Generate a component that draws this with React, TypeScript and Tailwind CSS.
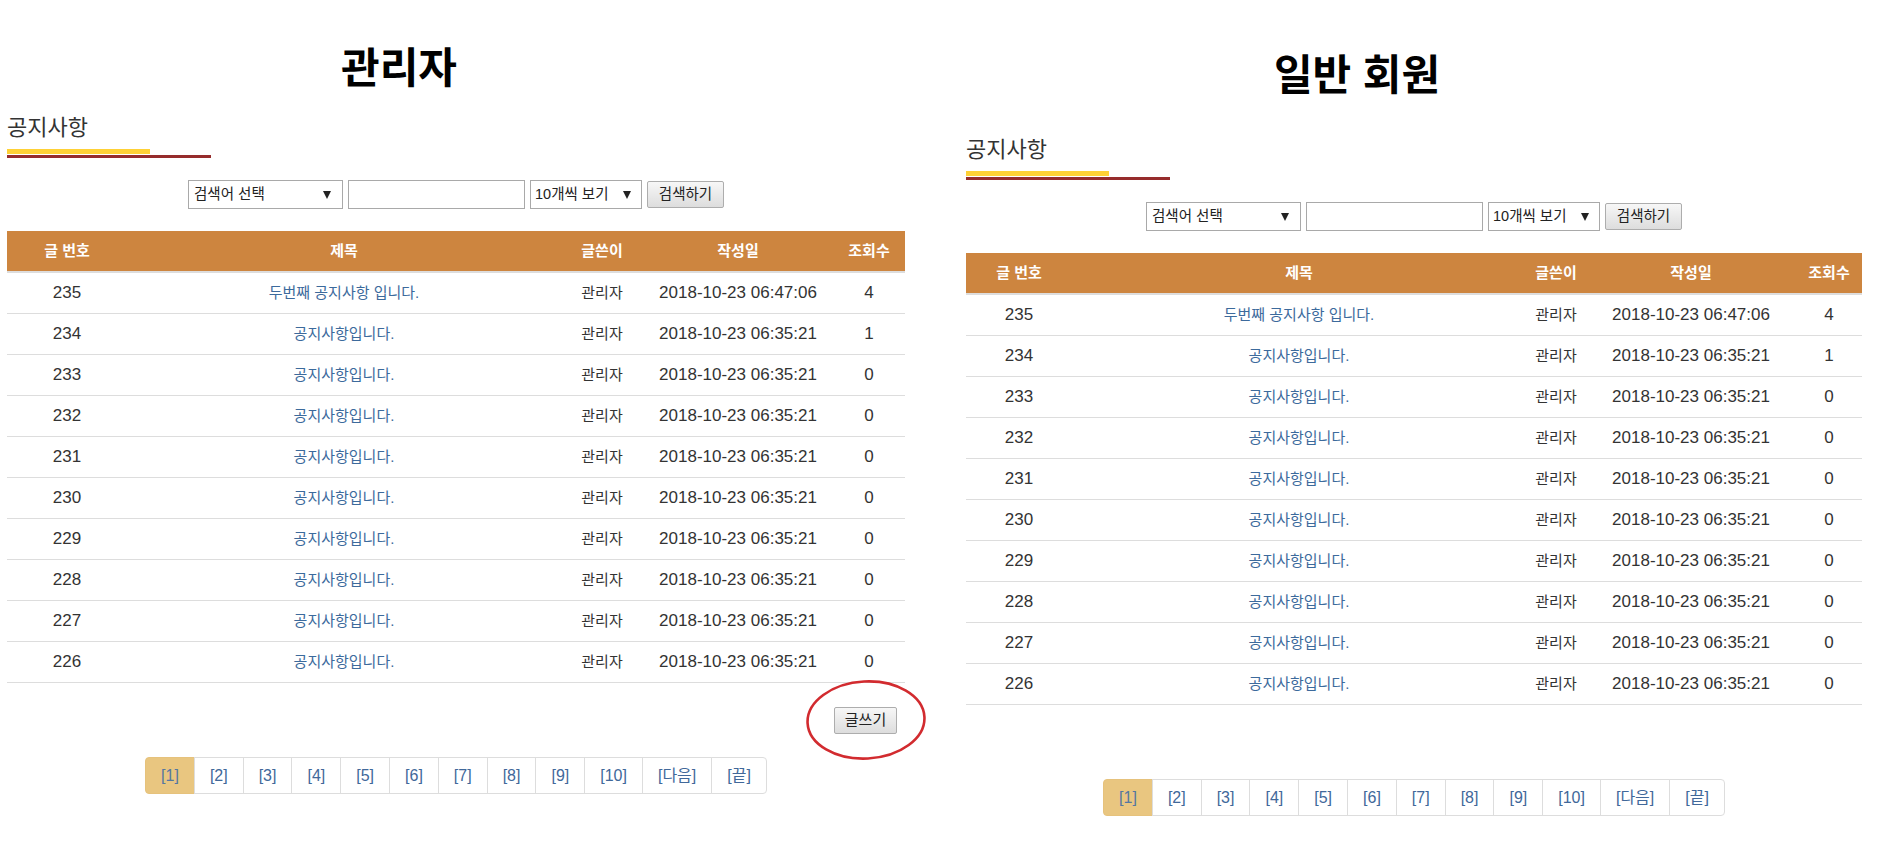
const rows = [
  { no: 235, title: '두번째 공지사항 입니다.', date: '2018-10-23 06:47:06', views: 4 },
  { no: 234, title: '공지사항입니다.', date: '2018-10-23 06:35:21', views: 1 },
  { no: 233, title: '공지사항입니다.', date: '2018-10-23 06:35:21', views: 0 },
  { no: 232, title: '공지사항입니다.', date: '2018-10-23 06:35:21', views: 0 },
  { no: 231, title: '공지사항입니다.', date: '2018-10-23 06:35:21', views: 0 },
  { no: 230, title: '공지사항입니다.', date: '2018-10-23 06:35:21', views: 0 },
  { no: 229, title: '공지사항입니다.', date: '2018-10-23 06:35:21', views: 0 },
  { no: 228, title: '공지사항입니다.', date: '2018-10-23 06:35:21', views: 0 },
  { no: 227, title: '공지사항입니다.', date: '2018-10-23 06:35:21', views: 0 },
  { no: 226, title: '공지사항입니다.', date: '2018-10-23 06:35:21', views: 0 },
]

const pages = ['[1]', '[2]', '[3]', '[4]', '[5]', '[6]', '[7]', '[8]', '[9]', '[10]', '[다음]', '[끝]']

function Arrow() {
  return (
    <svg width="8" height="9" viewBox="0 0 8 9" className="shrink-0">
      <path d="M0 1 L8 1 L4 9 Z" fill="#222" />
    </svg>
  )
}

function SearchBar() {
  return (
    <div className="flex items-center justify-center gap-[5px] text-[14.5px] text-[#222]">
      <div className="flex h-[29px] w-[155px] items-center justify-between border border-[#a9a9a9] bg-white pl-[5px] pr-[11px]">
        <span>검색어 선택</span>
        <Arrow />
      </div>
      <div className="h-[29px] w-[177px] border border-[#a9a9a9] bg-white" />
      <div className="flex h-[29px] w-[112px] items-center justify-between border border-[#a9a9a9] bg-white pl-[4px] pr-[10px]">
        <span>10개씩 보기</span>
        <Arrow />
      </div>
      <div className="flex h-[27px] w-[77px] items-center justify-center rounded-[2px] border border-[#adadad] bg-gradient-to-b from-[#f7f7f7] to-[#dddddd]">
        검색하기
      </div>
    </div>
  )
}

function Pagination() {
  return (
    <div className="flex justify-center">
      <div className="flex text-[16px] text-[#41689a]">
        {pages.map((p, i) => (
          <div
            key={p}
            className={
              'flex h-[37px] items-center border border-[#dddddd] px-[15px] ' +
              (i === 0 ? 'rounded-l-[4px] border-[#e6c27c] bg-[#e9c680] text-[#5577a0] ' : 'bg-white ') +
              (i > 0 ? '-ml-px ' : '') +
              (i === pages.length - 1 ? 'rounded-r-[4px]' : '')
            }
          >
            {p}
          </div>
        ))}
      </div>
    </div>
  )
}

type PanelProps = {
  title: string
  cols: string[]
  panelClass: string
  headingClass: string
  showWrite: boolean
}

function Panel({ title, cols, panelClass, headingClass, showWrite }: PanelProps) {
  const heads = ['글 번호', '제목', '글쓴이', '작성일', '조회수']
  return (
    <div className={panelClass}>
      <h1 className="h-[60px] pr-[114px] text-center text-[42px] font-bold leading-[60px] text-black">{title}</h1>

      {/* 공지사항 heading with underline */}
      <div className={headingClass}>
        <h3 className="text-[22px] leading-[30px] text-[#333]">공지사항</h3>
        <div className="mt-[6px] h-[5px] w-[143px] bg-[#fed136]" />
        <div className="mt-[1px] h-[3px] w-[204px] bg-[#962c2c]" />
      </div>

      <div className="mt-[22px]">
        <SearchBar />
      </div>

      <div className="mt-[22px]">
        <div className="flex h-[42px] border-b-2 border-[#dddddd] bg-[#cd853f] text-[15px] font-semibold text-white">
          {heads.map((h, i) => (
            <div key={h} className={'flex items-center justify-center ' + cols[i]}>
              {h}
            </div>
          ))}
        </div>
        {rows.map((r) => (
          <div key={r.no} className="flex h-[41px] border-b border-[#dddddd] text-[#333]">
            <div className={'flex items-center justify-center text-[17px] ' + cols[0]}>{r.no}</div>
            <div className={'flex items-center justify-center text-[15px] text-[#3c6a9c] ' + cols[1]}>{r.title}</div>
            <div className={'flex items-center justify-center text-[15px] ' + cols[2]}>관리자</div>
            <div className={'flex items-center justify-center text-[17px] ' + cols[3]}>{r.date}</div>
            <div className={'flex items-center justify-center text-[17px] ' + cols[4]}>{r.views}</div>
          </div>
        ))}
      </div>

      <div className={'mt-[24px] flex justify-end pr-[8px] ' + (showWrite ? '' : 'invisible')}>
        <div className="relative">
          <div className="flex h-[27px] w-[63px] items-center justify-center rounded-[2px] border border-[#adadad] bg-gradient-to-b from-[#f7f7f7] to-[#dddddd] text-[15px] text-[#222]">
            글쓰기
          </div>
          {/* red marker circle */}
          <svg className="pointer-events-none absolute left-[-29px] top-[-28px]" width="122" height="82" viewBox="0 0 122 82">
            <ellipse cx="61" cy="41" rx="58.5" ry="38.5" fill="none" stroke="#d22b2f" strokeWidth="2.6" transform="rotate(-3 61 41)" />
          </svg>
        </div>
      </div>

      <div className="mt-[23px]">
        <Pagination />
      </div>
    </div>
  )
}

export default function App() {
  return (
    <div className="flex h-[848px] w-[1890px] gap-[61px] bg-white pl-[7px] font-['Liberation_Sans','Noto_Sans_CJK_KR',sans-serif]">
      <Panel
        title="관리자"
        cols={['w-[120px]', 'w-[434px]', 'w-[82px]', 'w-[190px]', 'w-[72px]']}
        panelClass="w-[898px] shrink-0 pt-[39px]"
        headingClass="mt-[14px]"
        showWrite
      />
      <Panel
        title="일반 회원"
        cols={['w-[106px]', 'w-[454px]', 'w-[60px]', 'w-[210px]', 'w-[66px]']}
        panelClass="w-[896px] shrink-0 pt-[46px]"
        headingClass="mt-[29px]"
        showWrite={false}
      />
    </div>
  )
}
